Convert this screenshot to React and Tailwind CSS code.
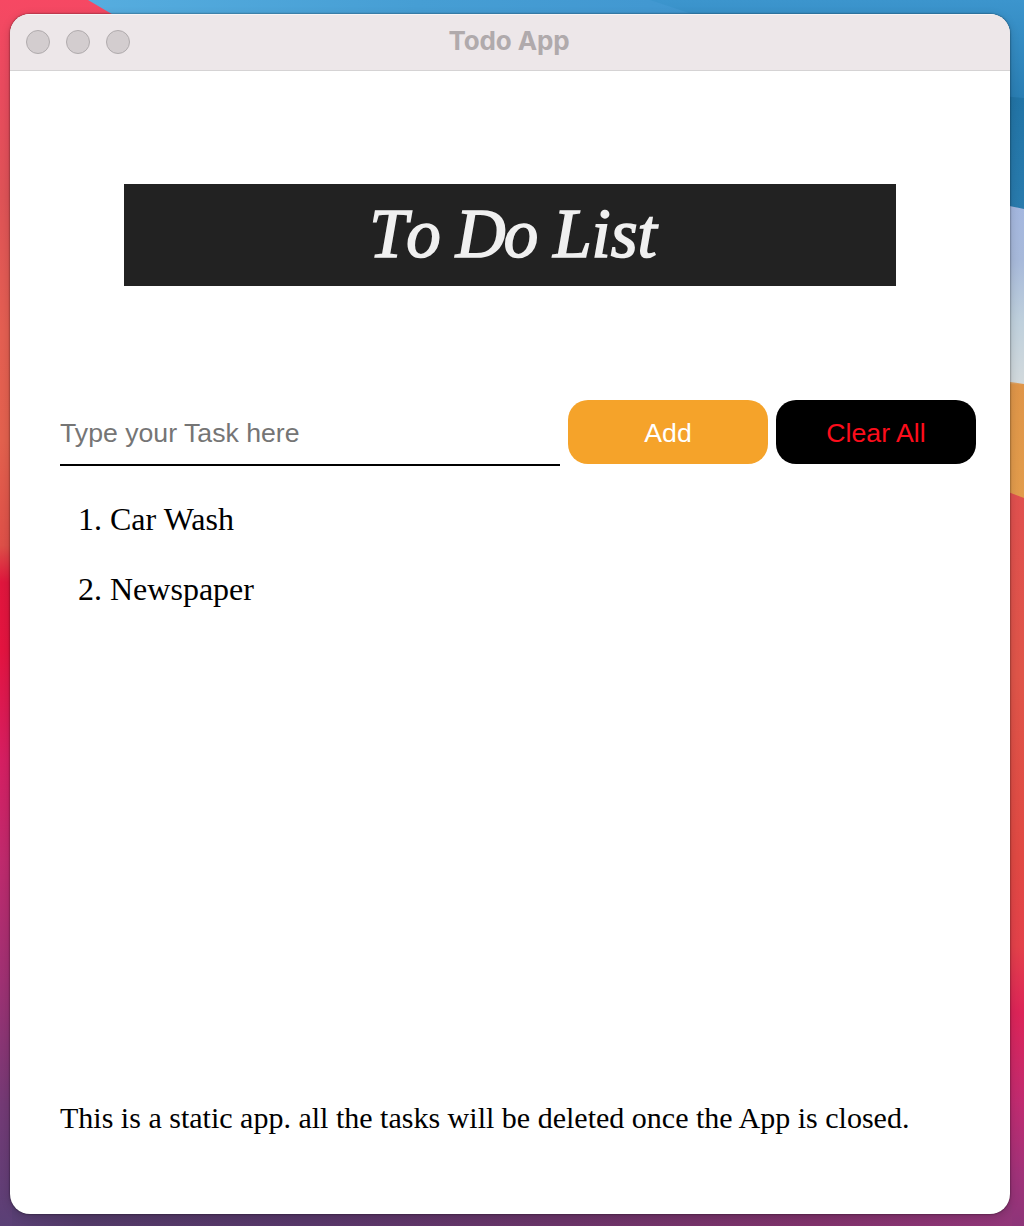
import React, { useState } from "react";

function Wallpaper() {
  return (
    <svg
      className="absolute inset-0 h-full w-full"
      viewBox="0 0 1024 1226"
      preserveAspectRatio="none"
      aria-hidden="true"
    >
      <defs>
        <linearGradient id="left" x1="0" y1="0" x2="0" y2="1226" gradientUnits="userSpaceOnUse">
          <stop offset="0" stopColor="#f64863" />
          <stop offset="0.07" stopColor="#ea4b5f" />
          <stop offset="0.16" stopColor="#df5357" />
          <stop offset="0.27" stopColor="#e45f52" />
          <stop offset="0.36" stopColor="#e3614e" />
          <stop offset="0.445" stopColor="#de5048" />
          <stop offset="0.475" stopColor="#e0163d" />
          <stop offset="0.53" stopColor="#e41440" />
          <stop offset="0.62" stopColor="#d61f62" />
          <stop offset="0.7" stopColor="#c02a6d" />
          <stop offset="0.8" stopColor="#9f3173" />
          <stop offset="0.9" stopColor="#743a75" />
          <stop offset="1" stopColor="#5a4076" />
        </linearGradient>
        <linearGradient id="right" x1="0" y1="490" x2="0" y2="1226" gradientUnits="userSpaceOnUse">
          <stop offset="0" stopColor="#e0504f" />
          <stop offset="0.25" stopColor="#df5549" />
          <stop offset="0.5" stopColor="#e04943" />
          <stop offset="0.62" stopColor="#e3414a" />
          <stop offset="0.71" stopColor="#dc2458" />
          <stop offset="0.83" stopColor="#c12b70" />
          <stop offset="0.93" stopColor="#a03279" />
          <stop offset="1" stopColor="#8d3579" />
        </linearGradient>
        <linearGradient id="sky" x1="90" y1="0" x2="1024" y2="0" gradientUnits="userSpaceOnUse">
          <stop offset="0" stopColor="#56addf" />
          <stop offset="0.35" stopColor="#469ed4" />
          <stop offset="0.6" stopColor="#4298d1" />
          <stop offset="1" stopColor="#3a90c8" />
        </linearGradient>
        <linearGradient id="skyEdge" x1="0" y1="0" x2="0" y2="97" gradientUnits="userSpaceOnUse">
          <stop offset="0" stopColor="#3c95cd" />
          <stop offset="1" stopColor="#2a7eb3" />
        </linearGradient>
        <linearGradient id="deep" x1="0" y1="97" x2="0" y2="209" gradientUnits="userSpaceOnUse">
          <stop offset="0" stopColor="#2274a6" />
          <stop offset="1" stopColor="#297bad" />
        </linearGradient>
        <linearGradient id="mist" x1="0" y1="206" x2="0" y2="384" gradientUnits="userSpaceOnUse">
          <stop offset="0" stopColor="#a4b7df" />
          <stop offset="0.3" stopColor="#a7b9da" />
          <stop offset="0.65" stopColor="#bfd0dc" />
          <stop offset="1" stopColor="#d2d9dc" />
        </linearGradient>
        <linearGradient id="sand" x1="0" y1="380" x2="0" y2="498" gradientUnits="userSpaceOnUse">
          <stop offset="0" stopColor="#d9bd99" />
          <stop offset="0.04" stopColor="#df9548" />
          <stop offset="1" stopColor="#e29c4c" />
        </linearGradient>
        <linearGradient id="floor" x1="0" y1="0" x2="1024" y2="0" gradientUnits="userSpaceOnUse">
          <stop offset="0" stopColor="#5a4076" />
          <stop offset="0.08" stopColor="#523a68" />
          <stop offset="0.3" stopColor="#573769" />
          <stop offset="0.55" stopColor="#6a3468" />
          <stop offset="0.8" stopColor="#80326b" />
          <stop offset="1" stopColor="#923679" />
        </linearGradient>
      </defs>
      <rect width="512" height="1226" fill="url(#left)" />
      <path d="M88 0H1024V60H190Z" fill="url(#sky)" />
      <path d="M650 0H1024V105H990L692 14Z" fill="url(#skyEdge)" />
      <path d="M990 95L1024 98V215H990Z" fill="url(#deep)" />
      <path d="M990 202L1024 209V390H990Z" fill="url(#mist)" />
      <path d="M990 379L1024 384V505H990Z" fill="url(#sand)" />
      <path d="M990 485L1024 498V1226H990Z" fill="url(#right)" />
      <rect x="12" y="1205" width="1000" height="21" fill="url(#floor)" />
    </svg>
  );
}

function TitleBar() {
  return (
    <header className="flex h-[57px] shrink-0 items-center border-t border-b border-t-[#f7f4f5] border-b-[#d5d3d4] bg-[#ede7e9] px-4 pb-px">
      <div className="flex w-[104px] gap-4">
        <span className="size-6 rounded-full border border-[#b0abad] bg-[#d3cdcf]" />
        <span className="size-6 rounded-full border border-[#b0abad] bg-[#d3cdcf]" />
        <span className="size-6 rounded-full border border-[#b0abad] bg-[#d3cdcf]" />
      </div>
      <h2 className="mr-[106px] flex-1 pb-0.5 text-center font-[Inter,sans-serif] text-[26px] leading-8 font-bold tracking-[-0.1px] text-[#b0aaac]">
        Todo App
      </h2>
    </header>
  );
}

export default function App() {
  const [tasks, setTasks] = useState(["Car Wash", "Newspaper"]);
  const [draft, setDraft] = useState("");

  function addTask() {
    if (!draft.trim()) return;
    setTasks([...tasks, draft.trim()]);
    setDraft("");
  }

  return (
    <div className="relative h-[1226px] w-[1024px] overflow-hidden px-[10px] pt-[14px]">
      <Wallpaper />
      <main className="relative flex h-[1200px] w-[1000px] flex-col overflow-hidden rounded-[20px] bg-white shadow-[0_0_2px_rgba(0,0,0,0.65),0_2px_10px_rgba(0,0,0,0.18)]">
        <TitleBar />
        <h1 className="mx-[114px] mt-[113px] flex h-[102px] shrink-0 items-center justify-center bg-[#222222] pb-0.5 pl-1.5 font-['Apple_Chancery','Liberation_Serif',serif] text-[69px] leading-none text-[#f0f0f0] italic [-webkit-text-stroke:1.6px_#f0f0f0]">
          <span className="flex">
            <span className="mr-[10px] tracking-[5px]">To</span>
            <span className="mr-[17px] tracking-[-2px]">Do</span>
            <span>List</span>
          </span>
        </h1>
        <div className="mt-[114px] flex shrink-0 gap-2 pl-[50px] font-['Liberation_Sans',Arial,sans-serif] text-[26.67px]">
          <input
            className="h-[66px] w-[500px] border-b-2 border-black bg-transparent pt-0.5 text-black outline-none placeholder:text-[#757575]"
            placeholder="Type your Task here"
            value={draft}
            onChange={(e) => setDraft(e.target.value)}
          />
          <button className="h-16 w-[200px] rounded-[20px] bg-[#f5a32a] pt-0.5 text-white" onClick={addTask}>
            Add
          </button>
          <button className="h-16 w-[200px] rounded-[20px] bg-black pt-0.5 text-[#fc0d1b]" onClick={() => setTasks([])}>
            Clear All
          </button>
        </div>
        <ol className="mt-[35px] list-decimal pl-[100px] font-['Liberation_Serif','Times_New_Roman',serif] text-[32px] leading-9 text-black">
          {tasks.map((task, i) => (
            <li key={i} className="mb-[34px]">
              {task}
            </li>
          ))}
        </ol>
        <p className="mt-auto mb-[78px] pl-[50px] font-['Liberation_Serif','Times_New_Roman',serif] text-[30.03px] leading-9 whitespace-nowrap text-black">
          This is a static app. all the tasks will be deleted once the App is closed.
        </p>
      </main>
    </div>
  );
}
